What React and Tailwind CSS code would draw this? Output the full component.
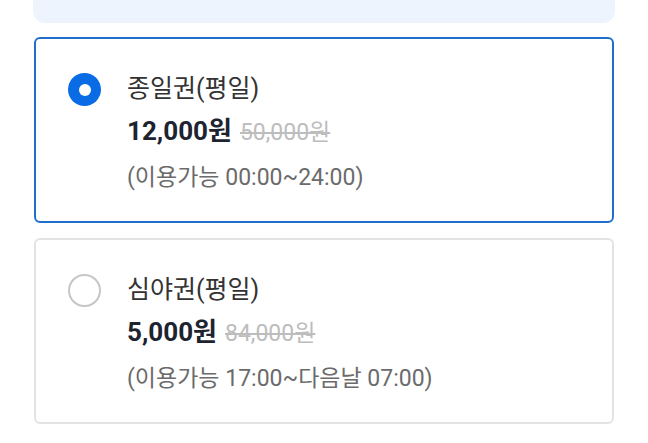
import React, { useState } from 'react';

const tickets = [
  { id: 'day', name: '종일권(평일)', price: '12,000원', original: '50,000원', hours: '(이용가능 00:00~24:00)' },
  { id: 'night', name: '심야권(평일)', price: '5,000원', original: '84,000원', hours: '(이용가능 17:00~다음날 07:00)' },
];

function Radio({ checked }) {
  return checked ? (
    <div className="w-[33px] h-[33px] rounded-full bg-[#0a6ce5] flex items-center justify-center shrink-0">
      <div className="w-[12px] h-[12px] rounded-full bg-white" />
    </div>
  ) : (
    <div className="w-[33px] h-[33px] rounded-full border-2 border-[#c6c6c6] bg-white shrink-0" />
  );
}

export default function App() {
  const [selected, setSelected] = useState('day');

  return (
    <div
      className="w-[648px] h-[443px] bg-white overflow-hidden px-[34px]"
      style={{ fontFamily: 'Roboto, "Noto Sans CJK KR", sans-serif' }}
    >
      {/* Info panel (scrolled off top) */}
      <div className="h-[23px] -mx-px rounded-b-[12px] bg-[#edf4fe]" />

      <div className="mt-[14px] flex flex-col gap-[15px]">
        {tickets.map(t => {
          const checked = selected === t.id;
          return (
            <div
              key={t.id}
              onClick={() => setSelected(t.id)}
              className={`h-[186px] rounded-[6px] border-2 pl-[32px] pt-[34px] flex items-start gap-[26px] cursor-pointer ${
                checked ? 'border-[#1f6fcb]' : 'border-[#e3e3e3]'
              }`}
            >
              <Radio checked={checked} />
              <div className="flex flex-col">
                <div className="h-[32px] leading-[32px] text-[25px] text-[#333333]">{t.name}</div>
                <div className="mt-[8px] h-[36px] leading-[36px] flex items-baseline gap-[8px]">
                  <span className="text-[26px] font-bold text-[#1e2330]">{t.price}</span>
                  <span className="text-[23px] text-[#bdbdbd] line-through">{t.original}</span>
                </div>
                <div className="mt-[14px] h-[30px] leading-[30px] text-[23px] text-[#6b6b6b]">{t.hours}</div>
              </div>
            </div>
          );
        })}
      </div>
    </div>
  );
}
